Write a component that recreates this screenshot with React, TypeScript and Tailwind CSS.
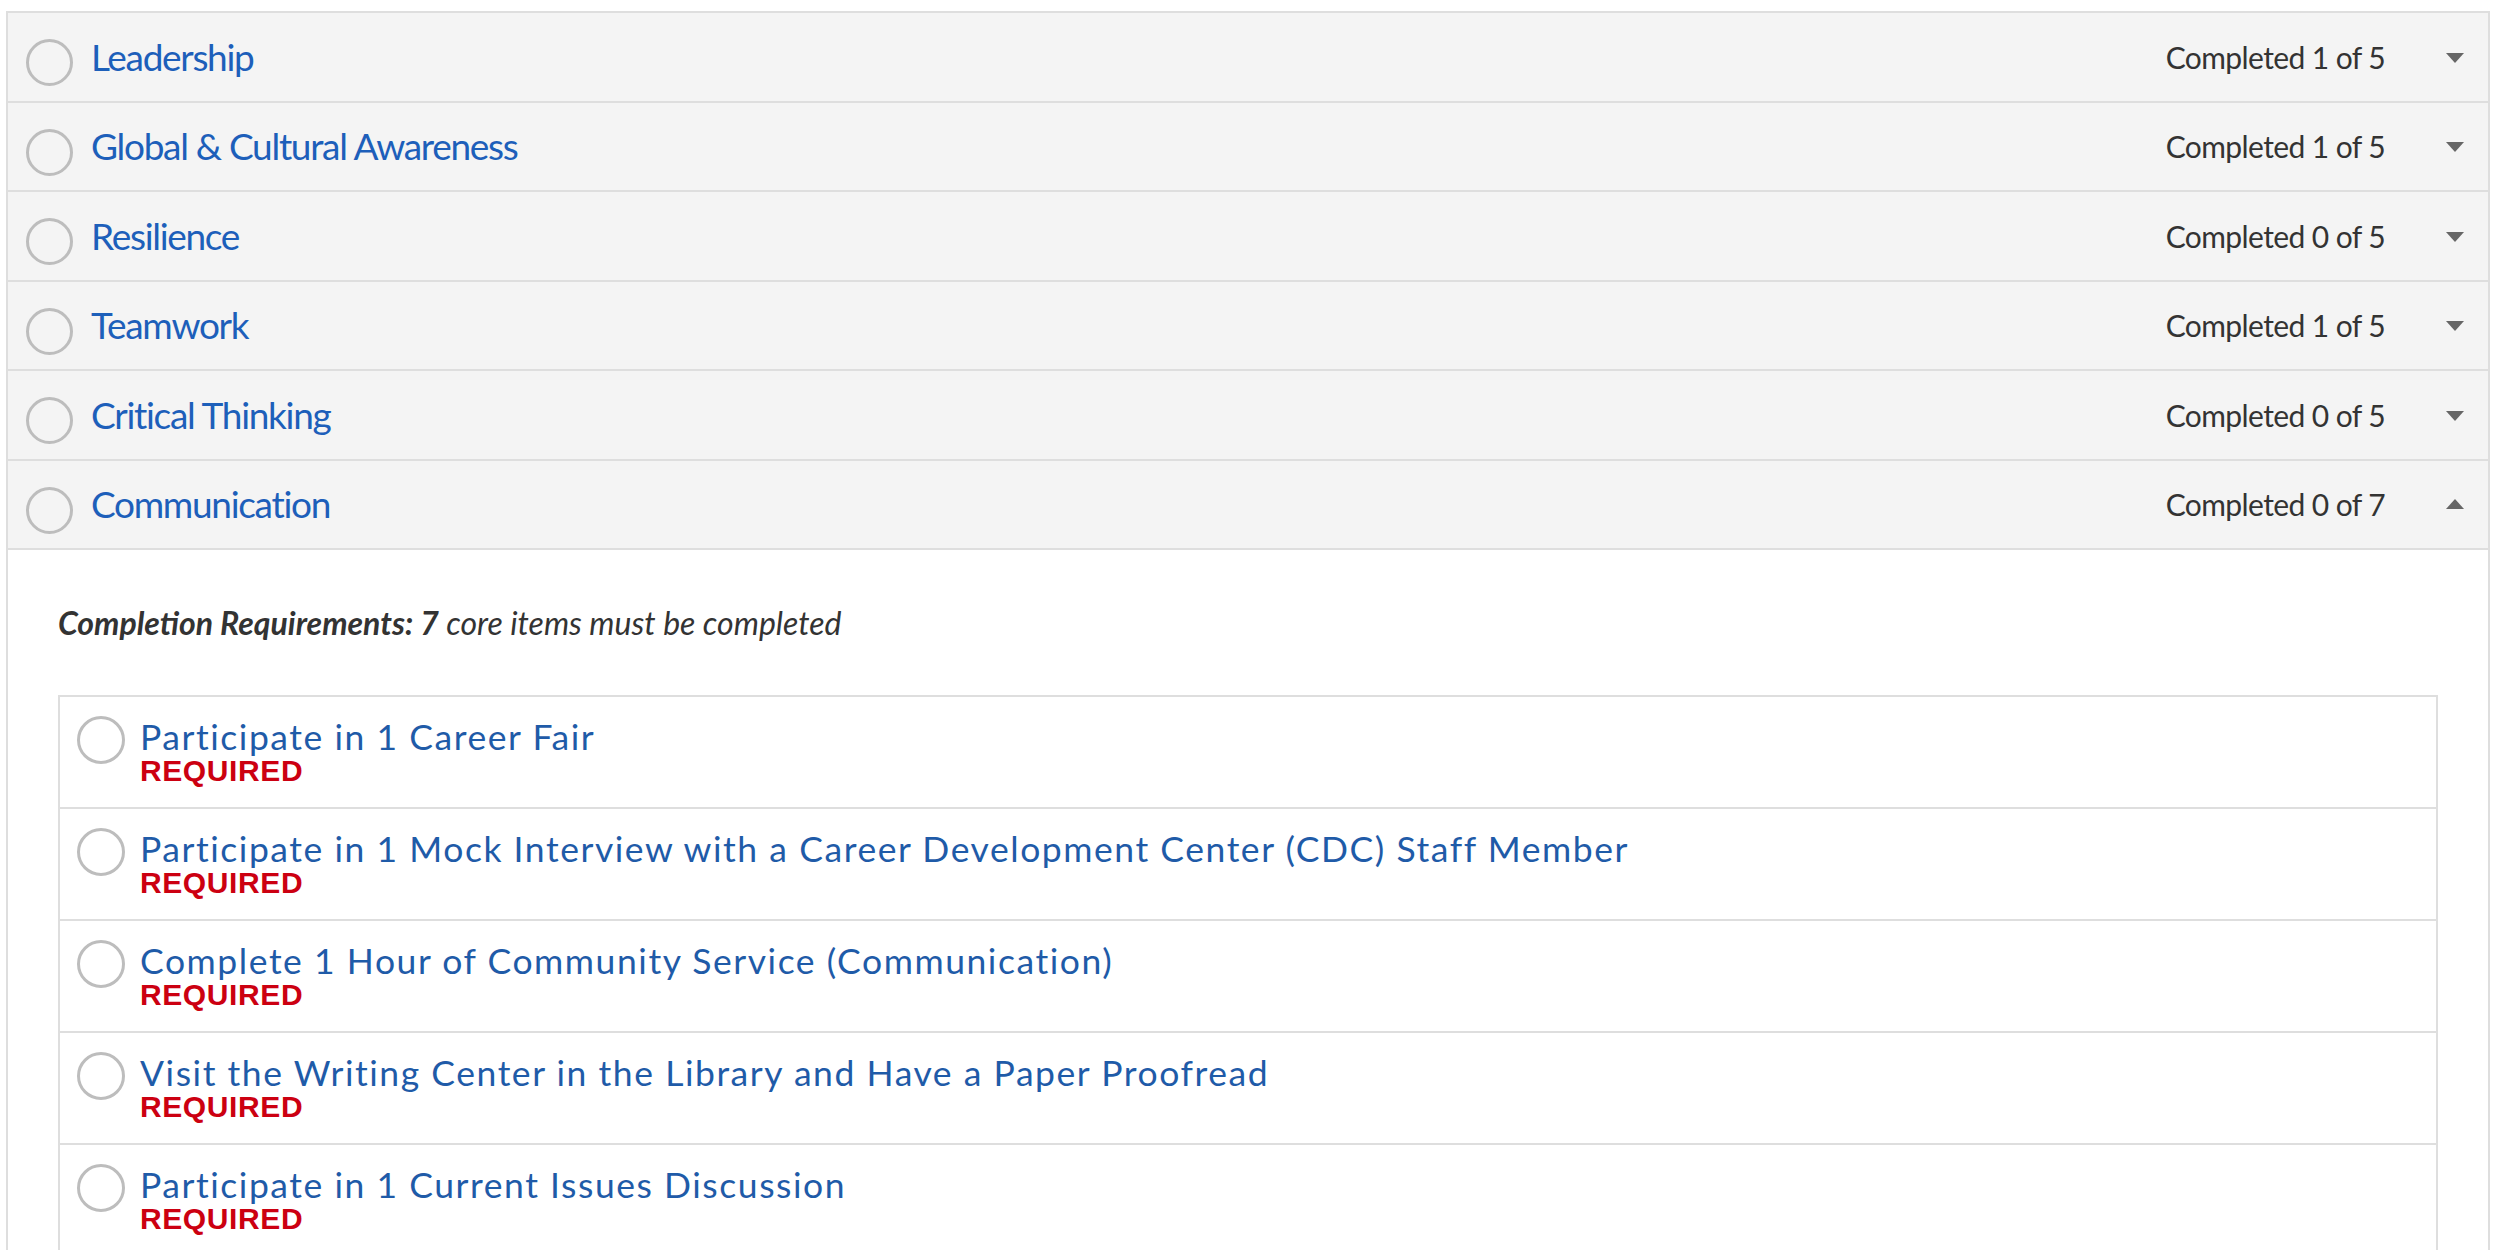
import React from "react";

type Section = { name: string; done: number; total: number; open?: boolean };

const sections: Section[] = [
  { name: "Leadership", done: 1, total: 5 },
  { name: "Global & Cultural Awareness", done: 1, total: 5 },
  { name: "Resilience", done: 0, total: 5 },
  { name: "Teamwork", done: 1, total: 5 },
  { name: "Critical Thinking", done: 0, total: 5 },
  { name: "Communication", done: 0, total: 7, open: true },
];

const items = [
  "Participate in 1 Career Fair",
  "Participate in 1 Mock Interview with a Career Development Center (CDC) Staff Member",
  "Complete 1 Hour of Community Service (Communication)",
  "Visit the Writing Center in the Library and Have a Paper Proofread",
  "Participate in 1 Current Issues Discussion",
];

function SectionHeader({ s }: { s: Section }) {
  return (
    <div className="flex h-[89.5px] items-center border-b-2 border-[#dedede] bg-[#f4f4f4] pl-[18px] pr-[24px]">
      <span className="mt-[12px] h-[47px] w-[47px] shrink-0 rounded-full border-[3.5px] border-[#bdbdbd]" />
      <span className="ml-[18px] text-[37px] leading-[44px] tracking-[-1.3px] text-[#1d5fba]">{s.name}</span>
      <span className="ml-auto text-[30px] leading-[36px] tracking-[-0.6px] text-[#333]">
        Completed {s.done} of {s.total}
      </span>
      {s.open ? (
        <span className="ml-[61px] h-0 w-0 border-x-[9px] border-b-[10px] border-x-transparent border-b-[#666]" />
      ) : (
        <span className="ml-[61px] mt-[2px] h-0 w-0 border-x-[9px] border-t-[10px] border-x-transparent border-t-[#666]" />
      )}
    </div>
  );
}

function Item({ title }: { title: string }) {
  return (
    <div className="flex h-[112px] items-start border-b-2 border-[#dedede] pl-[17px] pt-[19px]">
      <span className="h-[48px] w-[48px] shrink-0 rounded-full border-[3.5px] border-[#bdbdbd]" />
      <div className="ml-[15px] flex flex-col">
        <span className="text-[35.5px] leading-[42px] tracking-[1.55px] text-[#1f5ba8]">{title}</span>
        <span className="-mt-[2px] font-['Liberation_Sans',Arial,sans-serif] text-[30px] font-bold leading-[29px] tracking-[0.6px] text-[#cc0011]">
          REQUIRED
        </span>
      </div>
    </div>
  );
}

export default function App() {
  return (
    <div className="min-h-screen bg-white pt-[11px] pl-[6px] font-['Lato','Noto_Sans',sans-serif]">
      <div className="w-[2484px] border-2 border-b-0 border-[#dedede]">
        {sections.map((s) => (
          <SectionHeader key={s.name} s={s} />
        ))}
        <div className="px-[50px] pt-[54px]">
          <p className="text-[32px] italic leading-[38px] text-[#333]">
            <span className="font-bold">Completion Requirements: 7</span> core items must be completed
          </p>
          <div className="mt-[53px] border-x-2 border-t-2 border-[#dedede]">
            {items.map((t) => (
              <Item key={t} title={t} />
            ))}
          </div>
        </div>
      </div>
    </div>
  );
}
